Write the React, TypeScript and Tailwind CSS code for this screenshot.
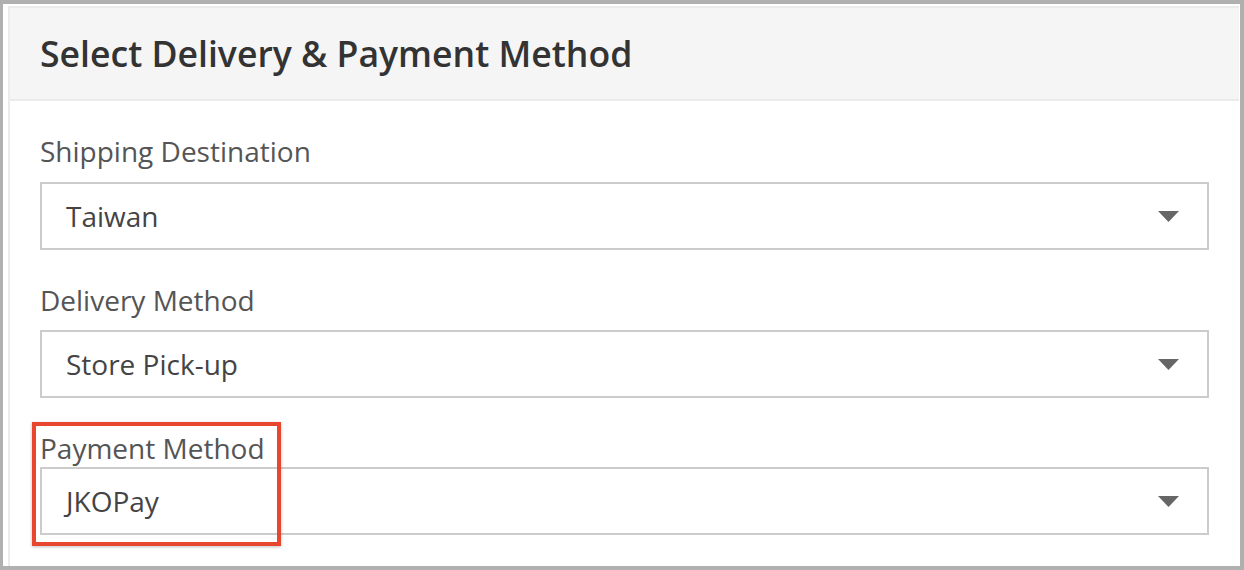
import React from "react";

function Caret() {
  return (
    <svg width="21" height="11" viewBox="0 0 21 11" className="shrink-0">
      <polygon points="0,0 21,0 10.5,11" fill="#666666" />
    </svg>
  );
}

function SelectBox({ value }: { value: string }) {
  return (
    <div className="flex h-[68px] items-center justify-between border-2 border-[#cccccc] bg-white pl-[24px] pr-[28px]">
      <span className="text-[28px] leading-[38px] text-[#444444]">{value}</span>
      <Caret />
    </div>
  );
}

export default function App() {
  return (
    <div
      className="h-[570px] w-[1244px] border-t-[4px] border-l-[3px] border-r-[4px] border-b-[4px] border-[#b0b0b0] bg-white pt-[2px] pl-[5px] pr-[1px]"
      style={{ fontFamily: '"Open Sans", "Noto Sans", sans-serif' }}
    >
      <div className="h-full border-l-2 border-t-2 border-[#ebebeb]">
        <div className="flex h-[93px] items-center border-b-2 border-[#ebebeb] bg-[#f5f5f5] pl-[30px]">
          <h1 className="text-[35.6px] font-semibold leading-[48px] text-[#333333] pb-[2px]">
            Select Delivery &amp; Payment Method
          </h1>
        </div>
        <div className="pl-[30px] pr-[30px]">
          <div className="pt-[31px]">
            <div className="text-[28px] leading-[38px] text-[#555555]">Shipping Destination</div>
            <div className="mt-[12px]">
              <SelectBox value="Taiwan" />
            </div>
          </div>
          <div className="pt-[31px]">
            <div className="text-[28px] leading-[38px] text-[#555555]">Delivery Method</div>
            <div className="mt-[11px]">
              <SelectBox value="Store Pick-up" />
            </div>
          </div>
          <div className="relative pt-[31px]">
            <div className="text-[28px] leading-[38px] text-[#555555]">Payment Method</div>
            <div className="mt-0">
              <SelectBox value="JKOPay" />
            </div>
            <div className="pointer-events-none absolute left-[-8px] top-[24px] h-[124px] w-[249px] border-[4px] border-[#e8462e] shadow-[0_1px_3px_rgba(0,0,0,0.25)]" />
          </div>
        </div>
      </div>
    </div>
  );
}
